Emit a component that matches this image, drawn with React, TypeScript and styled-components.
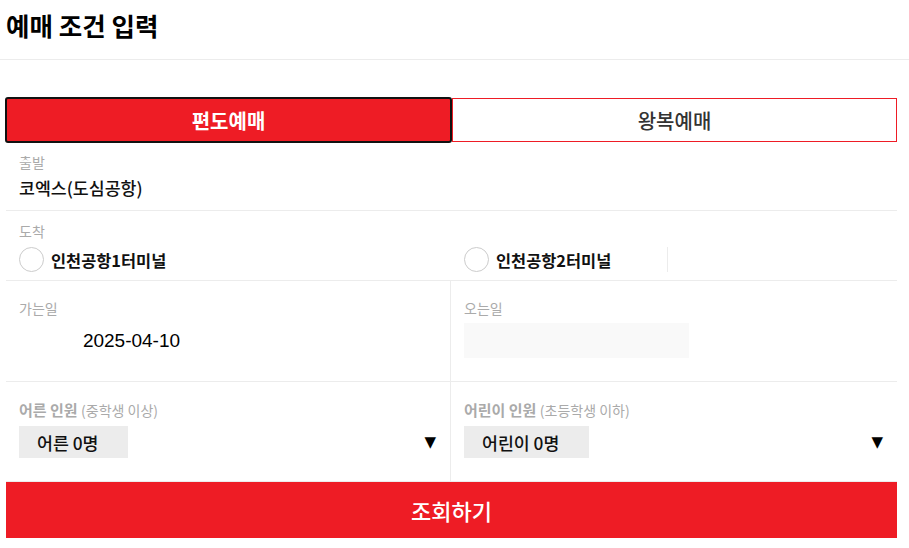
import React from "react";
import styled, { createGlobalStyle } from "styled-components";

const Global = createGlobalStyle`
  html, body { margin: 0; padding: 0; background: #fff; }
  body { font-family: "Noto Sans CJK KR", "Noto Sans", sans-serif; color: #111; }
  * { box-sizing: border-box; }
`;

const RED = "#ee1c25";
const LINE = "#ececec";

const Header = styled.header`
  height: 60px;
  padding: 8px 6px 0;
  border-bottom: 1px solid ${LINE};
`;

const Title = styled.h1`
  margin: 0;
  font-size: 25.5px;
  line-height: 34px;
  font-weight: 700;
  color: #000;
`;

const Form = styled.div`
  margin: 37px 12px 0 6px;
`;

const Tabs = styled.div`
  display: grid;
  grid-template-columns: 447px 1fr;
  align-items: center;
  margin-left: -1px;
`;

const Tab = styled.button<{ $active?: boolean }>`
  font-family: inherit;
  font-size: 20px;
  cursor: pointer;
  height: ${(p) => (p.$active ? "46px" : "44px")};
  border-radius: ${(p) => (p.$active ? "3px" : "0")};
  border: ${(p) => (p.$active ? "2px solid #111" : `1px solid ${RED}`)};
  background: ${(p) => (p.$active ? RED : "#fff")};
  color: ${(p) => (p.$active ? "#fff" : "#333")};
  font-weight: ${(p) => (p.$active ? 700 : 500)};
  padding: 0;
`;

const Section = styled.div<{ $pt: number; $pb: number }>`
  padding: ${(p) => p.$pt}px 0 ${(p) => p.$pb}px 13px;
  border-bottom: 1px solid ${LINE};
`;

const Label = styled.div`
  font-size: 14px;
  line-height: 18px;
  color: #aaa;
`;

const Value = styled.div`
  margin-top: 6px;
  font-size: 17.3px;
  line-height: 22px;
  font-weight: 500;
  color: #111;
`;

const RadioGrid = styled.div`
  display: grid;
  grid-template-columns: 445px 1fr;
  margin-top: 7px;
  margin-left: -13px;
`;

const RadioCell = styled.div`
  padding-left: 13px;
  display: flex;
  align-items: center;
`;

const RadioOption = styled.label<{ $divided?: boolean }>`
  display: flex;
  align-items: center;
  gap: 7px;
  height: 25px;
  width: ${(p) => (p.$divided ? "204px" : "auto")};
  border-right: ${(p) => (p.$divided ? `1px solid ${LINE}` : "none")};
  font-size: 16.4px;
  font-weight: 700;
  color: #111;
`;

const Circle = styled.span`
  width: 25px;
  height: 25px;
  border-radius: 50%;
  border: 1px solid #ccc;
  background: #fff;
  flex: none;
`;

const Split = styled.div`
  display: grid;
  grid-template-columns: 445px 1fr;
  border-bottom: 1px solid ${LINE};
`;

const Col = styled.div<{ $pt: number; $pb: number; $first?: boolean }>`
  padding: ${(p) => p.$pt}px 13px ${(p) => p.$pb}px 13px;
  border-right: ${(p) => (p.$first ? `1px solid ${LINE}` : "none")};
`;

const DateBox = styled.div<{ $empty?: boolean }>`
  margin-top: 6px;
  width: 225px;
  height: 35px;
  display: flex;
  align-items: center;
  justify-content: center;
  background: ${(p) => (p.$empty ? "#f9f9f9" : "#fff")};
  font-family: "Liberation Sans", Arial, sans-serif;
  font-size: 19px;
  color: #000;
`;

const CountLabel = styled.div`
  font-size: 15px;
  line-height: 18px;
  font-weight: 700;
  color: #aaa;
`;

const Sub = styled.span`
  font-size: 14px;
  font-weight: 400;
`;

const SelectRow = styled.div`
  margin-top: 7px;
  display: flex;
  align-items: center;
  justify-content: space-between;
`;

const SelectBox = styled.div`
  height: 32px;
  display: flex;
  align-items: center;
  padding: 0 30px 0 18px;
  background: #ececec;
  font-size: 17.3px;
  font-weight: 500;
  color: #111;
`;

const Arrow = styled.span`
  font-family: "DejaVu Sans", sans-serif;
  font-size: 15px;
  color: #000;
  margin-right: 1px;
`;

const Submit = styled.button`
  display: block;
  width: 100%;
  height: 56px;
  border: none;
  background: ${RED};
  color: #fff;
  font-family: inherit;
  font-size: 22px;
  font-weight: 500;
  cursor: pointer;
`;

export default function App() {
  return (
    <>
      <Global />
      <Header>
        <Title>예매 조건 입력</Title>
      </Header>
      <Form>
        <Tabs>
          <Tab $active>편도예매</Tab>
          <Tab>왕복예매</Tab>
        </Tabs>
        <Section $pt={10} $pb={11}>
          <Label>출발</Label>
          <Value>코엑스(도심공항)</Value>
        </Section>
        <Section $pt={11} $pb={8}>
          <Label>도착</Label>
          <RadioGrid>
            <RadioCell>
              <RadioOption>
                <Circle />
                인천공항1터미널
              </RadioOption>
            </RadioCell>
            <RadioCell>
              <RadioOption $divided>
                <Circle />
                인천공항2터미널
              </RadioOption>
            </RadioCell>
          </RadioGrid>
        </Section>
        <Split>
          <Col $first $pt={18} $pb={23}>
            <Label>가는일</Label>
            <DateBox>2025-04-10</DateBox>
          </Col>
          <Col $pt={18} $pb={23}>
            <Label>오는일</Label>
            <DateBox $empty />
          </Col>
        </Split>
        <Split>
          <Col $first $pt={19} $pb={23}>
            <CountLabel>
              어른 인원 <Sub>(중학생 이상)</Sub>
            </CountLabel>
            <SelectRow>
              <SelectBox>어른 0명</SelectBox>
              <Arrow>▼</Arrow>
            </SelectRow>
          </Col>
          <Col $pt={19} $pb={23}>
            <CountLabel>
              어린이 인원 <Sub>(초등학생 이하)</Sub>
            </CountLabel>
            <SelectRow>
              <SelectBox>어린이 0명</SelectBox>
              <Arrow>▼</Arrow>
            </SelectRow>
          </Col>
        </Split>
        <Submit>조회하기</Submit>
      </Form>
    </>
  );
}
